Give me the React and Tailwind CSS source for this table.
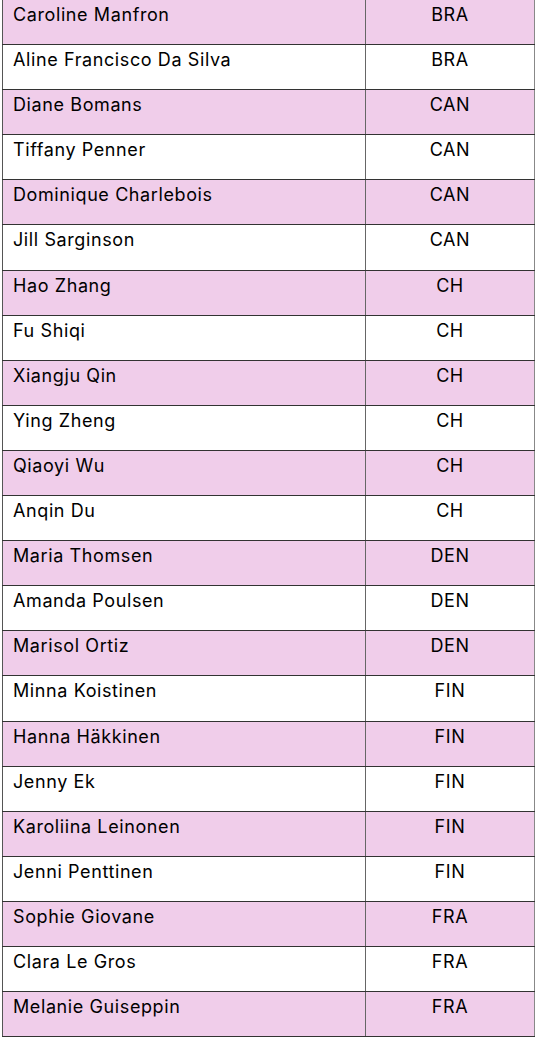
const ROWS = [
  ["Caroline Manfron", "BRA"],
  ["Aline Francisco Da Silva", "BRA"],
  ["Diane Bomans", "CAN"],
  ["Tiffany Penner", "CAN"],
  ["Dominique Charlebois", "CAN"],
  ["Jill Sarginson", "CAN"],
  ["Hao Zhang", "CH"],
  ["Fu Shiqi", "CH"],
  ["Xiangju Qin", "CH"],
  ["Ying Zheng", "CH"],
  ["Qiaoyi Wu", "CH"],
  ["Anqin Du", "CH"],
  ["Maria Thomsen", "DEN"],
  ["Amanda Poulsen", "DEN"],
  ["Marisol Ortiz", "DEN"],
  ["Minna Koistinen", "FIN"],
  ["Hanna Häkkinen", "FIN"],
  ["Jenny Ek", "FIN"],
  ["Karoliina Leinonen", "FIN"],
  ["Jenni Penttinen", "FIN"],
  ["Sophie Giovane", "FRA"],
  ["Clara Le Gros", "FRA"],
  ["Melanie Guiseppin", "FRA"],
];

export default function App() {
  return (
    <div className="w-[536px] h-[1044px] bg-white overflow-hidden" style={{ fontFamily: "Inter, 'Open Sans', sans-serif" }}>
      <table className="ml-[2px] mt-[-1px] w-[533px] border-collapse text-[18px] tracking-[0.6px] text-black">
        <tbody>
          {ROWS.map(([name, code], i) => (
            <tr key={i} className={`h-[45.1px] ${i % 2 === 0 ? "bg-[#f0cdea]" : "bg-white"}`}>
              <td className="w-[363px] align-top pl-[10px] pt-[2px] leading-[26px] border border-l-[#555] border-r-[#666] border-y-[#333]">
                {name}
              </td>
              <td className="align-top text-center pt-[2px] leading-[26px] border border-l-[#666] border-r-[#888] border-y-[#333]">
                {code}
              </td>
            </tr>
          ))}
        </tbody>
      </table>
    </div>
  );
}
